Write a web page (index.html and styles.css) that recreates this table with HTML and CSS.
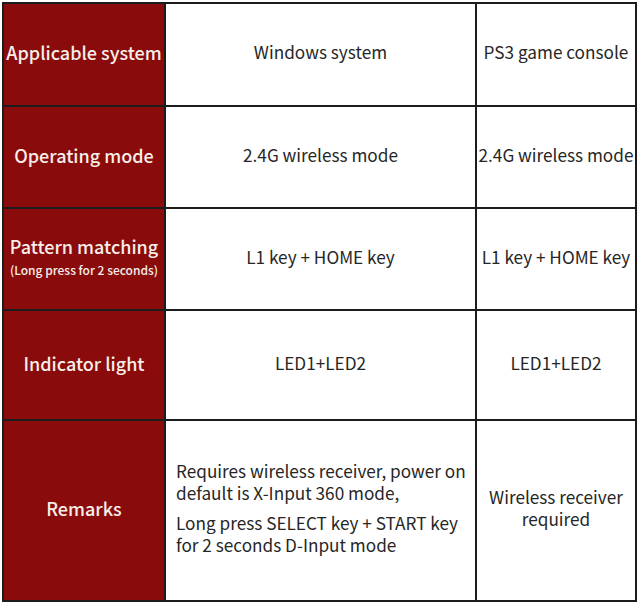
FILE: index.html
```html
<!DOCTYPE html>
<html lang="en">
<head>
<meta charset="utf-8">
<title>Mode table</title>
<link rel="stylesheet" href="styles.css">
</head>
<body>
<div class="table">
  <div class="cell head">Applicable system</div>
  <div class="cell">Windows system</div>
  <div class="cell">PS3 game console</div>

  <div class="cell head">Operating mode</div>
  <div class="cell">2.4G wireless mode</div>
  <div class="cell">2.4G wireless mode</div>

  <div class="cell head stack">
    <span>Pattern matching</span>
    <span class="small">(Long press for 2 seconds)</span>
  </div>
  <div class="cell">L1 key + HOME key</div>
  <div class="cell">L1 key + HOME key</div>

  <div class="cell head">Indicator light</div>
  <div class="cell">LED1+LED2</div>
  <div class="cell">LED1+LED2</div>

  <div class="cell head">Remarks</div>
  <div class="cell left">
    <div class="notes">
      <p>Requires wireless receiver, power on default is X-Input 360 mode,</p>
      <p>Long press SELECT key + START key for 2 seconds D-Input mode</p>
    </div>
  </div>
  <div class="cell">
    <p class="wrap">Wireless receiver required</p>
  </div>
</div>
</body>
</html>
```

FILE: styles.css
```css
html, body {
  margin: 0;
  padding: 0;
  background: #ffffff;
}

body {
  width: 640px;
  height: 604px;
  overflow: hidden;
  font-family: "Noto Sans CJK SC", "Noto Sans", sans-serif;
}

.table {
  margin: 2px 0 0 2px;
  display: grid;
  grid-template-columns: 160px 309px 158px;
  grid-template-rows: 101px 100px 100px 108px 179px;
  gap: 2px;
  padding: 2px;
  width: max-content;
  background: #1c1c1c;
}

.cell {
  background: #ffffff;
  color: #262626;
  font-size: 17.2px;
  line-height: 22px;
  display: flex;
  align-items: center;
  justify-content: center;
  text-align: center;
  padding-bottom: 5px;
  box-sizing: border-box;
  white-space: nowrap;
}

.head {
  background: #8a0b0b;
  color: #f6eee9;
  font-size: 18px;
  font-weight: 500;
}

.stack {
  flex-direction: column;
  gap: 3px;
}

.small {
  font-size: 12px;
  line-height: 18px;
  font-weight: 500;
  padding-top: 1px;
}

.left {
  justify-content: flex-start;
  text-align: left;
  padding-left: 10px;
  white-space: normal;
}

.notes p {
  margin: 0;
}

.notes p + p {
  margin-top: 8px;
}

.wrap {
  margin: 0;
  width: 140px;
  white-space: normal;
  text-align: center;
}
```
